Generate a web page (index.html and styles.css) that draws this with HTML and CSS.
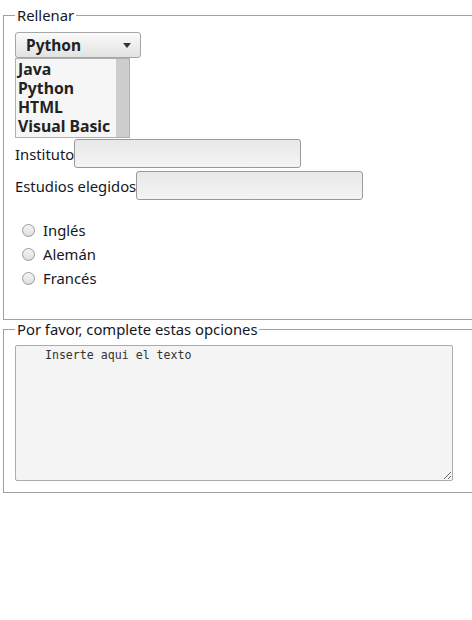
FILE: index.html
```html
<!DOCTYPE html>
<html lang="es">
<head>
<meta charset="utf-8">
<link rel="stylesheet" href="styles.css">
</head>
<body>
<fieldset class="box box-one">
  <legend class="legend">Rellenar</legend>
  <div class="select">
    <span class="select-value">Python</span>
    <span class="select-arrow"></span>
  </div>
  <div class="listbox">
    <ul class="listbox-items">
      <li>Java</li>
      <li>Python</li>
      <li>HTML</li>
      <li>Visual Basic</li>
    </ul>
    <div class="listbox-scroll"></div>
  </div>
  <div class="field field-first">
    <label class="field-label">Instituto</label>
    <input class="text-input" type="text">
  </div>
  <div class="field">
    <label class="field-label">Estudios elegidos</label>
    <input class="text-input" type="text">
  </div>
  <div class="radios">
    <label class="radio-row"><input class="radio" type="radio" name="idioma"><span>Inglés</span></label>
    <label class="radio-row"><input class="radio" type="radio" name="idioma"><span>Alemán</span></label>
    <label class="radio-row"><input class="radio" type="radio" name="idioma"><span>Francés</span></label>
  </div>
</fieldset>
<fieldset class="box box-two">
  <legend class="legend">Por favor, complete estas opciones</legend>
  <textarea class="textarea">    Inserte aqui el texto</textarea>
</fieldset>
</body>
</html>
```

FILE: styles.css
```css
html, body {
  margin: 0;
  padding: 0;
  background: #fff;
}
body {
  font-family: "Noto Sans", "DejaVu Sans", sans-serif;
  font-size: 14.8px;
  color: #141824;
  overflow: hidden;
}
.box {
  margin: 0 0 0 3px;
  border: 1px solid #a0a0a0;
  padding: 0 11px;
  width: 500px;
  box-sizing: border-box;
  min-width: 0;
}
.box-one {
  margin-top: 6px;
  padding-bottom: 29px;
}
.box-two {
  padding-bottom: 11px;
}
.legend {
  padding: 0 2px;
  margin-left: 0;
  font-size: 14.8px;
  line-height: 18px;
  color: #141824;
}
.select {
  margin-top: 8px;
  width: 126px;
  height: 26px;
  box-sizing: border-box;
  border: 1px solid #a6a6a6;
  border-radius: 3px;
  background: linear-gradient(#fafafa, #e2e2e2);
  display: flex;
  align-items: center;
  justify-content: space-between;
  padding: 0 9px 0 10px;
}
.select-value {
  font-weight: bold;
  font-size: 15.5px;
  color: #222;
}
.select-arrow {
  width: 0;
  height: 0;
  border-left: 4px solid transparent;
  border-right: 4px solid transparent;
  border-top: 5px solid #333;
}
.listbox {
  margin-top: 0;
  width: 115px;
  height: 80px;
  box-sizing: border-box;
  border: 1px solid #b0b0b0;
  background: #f6f6f6;
  display: flex;
}
.listbox-items {
  list-style: none;
  margin: 0;
  padding: 1px 0 0 2px;
  flex: 1;
  font-weight: bold;
  font-size: 15.8px;
  line-height: 19px;
  color: #222;
  white-space: nowrap;
  overflow: hidden;
}
.listbox-scroll {
  width: 13px;
  background: #cdcdcd;
}
.field {
  display: flex;
  align-items: center;
  margin-top: 3px;
}
.field-first {
  margin-top: 1px;
}
.field-label {
  font-size: 14.8px;
}
.text-input {
  width: 227px;
  height: 29px;
  box-sizing: border-box;
  margin: 0;
  border: 1px solid #9a9a9a;
  border-radius: 3px;
  background: linear-gradient(#e8e8e8, #f4f4f4);
}
.radios {
  margin-top: 18px;
  display: flex;
  flex-direction: column;
}
.radio-row {
  display: flex;
  align-items: center;
  height: 24px;
  font-size: 14.8px;
}
.radio {
  appearance: none;
  -webkit-appearance: none;
  width: 13px;
  height: 13px;
  box-sizing: border-box;
  margin: 0 8px 0 7px;
  border: 1px solid #9a9a9a;
  border-radius: 50%;
  background: linear-gradient(#f4f4f4, #dedede);
}
.textarea {
  display: block;
  margin-top: 7px;
  width: 438px;
  height: 136px;
  box-sizing: border-box;
  border: 1px solid #ababab;
  border-radius: 2px;
  background: #f4f4f4;
  padding: 2px 2px 2px 1px;
  font-family: "DejaVu Sans Mono", monospace;
  font-size: 11.6px;
  line-height: 15px;
  color: #333;
  resize: both;
}
```
